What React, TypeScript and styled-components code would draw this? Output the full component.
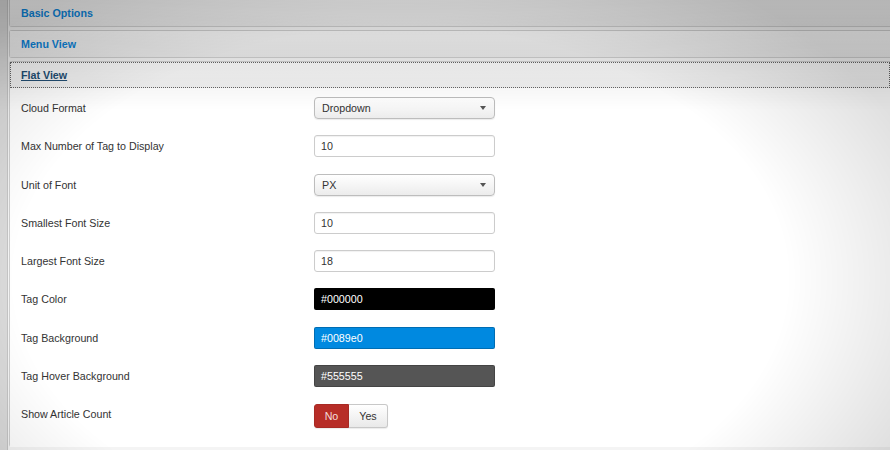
import styled, { createGlobalStyle } from 'styled-components';

const GlobalStyle = createGlobalStyle`
	html, body {
		margin: 0;
		padding: 0;
		background: #e2e2e2;
		font-family: "Liberation Sans", Arial, sans-serif;
		font-size: 10.7px;
		color: #333;
	}
	#root {
		width: 890px;
		height: 450px;
		overflow: hidden;
		position: relative;
	}
`;

interface Field {
	label: string;
	kind: 'select' | 'text' | 'color' | 'toggle';
	value?: string;
	swatch?: string;
}

const fields: Field[] = [
	{ label: 'Cloud Format', kind: 'select', value: 'Dropdown' },
	{ label: 'Max Number of Tag to Display', kind: 'text', value: '10' },
	{ label: 'Unit of Font', kind: 'select', value: 'PX' },
	{ label: 'Smallest Font Size', kind: 'text', value: '10' },
	{ label: 'Largest Font Size', kind: 'text', value: '18' },
	{ label: 'Tag Color', kind: 'color', value: '#000000', swatch: '#000000' },
	{ label: 'Tag Background', kind: 'color', value: '#0089e0', swatch: '#0089e0' },
	{ label: 'Tag Hover Background', kind: 'color', value: '#555555', swatch: '#555555' },
	{ label: 'Show Article Count', kind: 'toggle' },
];

export default function App() {
	return (
		<>
			<GlobalStyle />
			<Page>
				<Sliders>
					<Panel first>
						<Title first>
							<TitleLink>Basic Options</TitleLink>
						</Title>
					</Panel>
					<Panel>
						<Title>
							<TitleLink>Menu View</TitleLink>
						</Title>
					</Panel>
					<Panel open>
						<Title active>
							<TitleLink active>Flat View</TitleLink>
						</Title>
						<Body>
							{fields.map((f) => (
								<Row key={f.label}>
									<Label>{f.label}</Label>
									{f.kind === 'select' && (
										<Select>
											<span>{f.value}</span>
											<Caret />
										</Select>
									)}
									{f.kind === 'text' && <TextInput>{f.value}</TextInput>}
									{f.kind === 'color' && (
										<ColorInput swatch={f.swatch!}>{f.value}</ColorInput>
									)}
									{f.kind === 'toggle' && (
										<Toggle>
											<ToggleBtn active>No</ToggleBtn>
											<ToggleBtn>Yes</ToggleBtn>
										</Toggle>
									)}
								</Row>
							))}
						</Body>
					</Panel>
				</Sliders>
			</Page>
			<Vignette />
		</>
	);
}

const Page = styled.div`
	height: 450px;
	padding-left: 7px;
	background: #dadada;
`;

const Sliders = styled.div`
	height: 100%;
	display: flex;
	flex-direction: column;
	border-left: 1px solid #c4c4c4;
	background: #f4f4f4;
`;

const Panel = styled.div<{ first?: boolean; open?: boolean }>`
	display: flex;
	flex-direction: column;
	flex: ${(p) => (p.open ? '1' : 'none')};
	margin-left: 1px;
	margin-bottom: 3px;
	border: 1px solid #cfcfcf;
	border-right: 0;
	border-top: ${(p) => (p.first ? '0' : '1px solid #cfcfcf')};
	border-radius: ${(p) => (p.first ? '0 0 0 3px' : '3px 0 0 3px')};
	background: ${(p) => (p.open ? '#fff' : '#f2f2f2')};
	border-bottom: ${(p) => (p.open ? '0' : '1px solid #cfcfcf')};
`;

const Title = styled.h3<{ first?: boolean; active?: boolean }>`
	margin: 0;
	flex: none;
	height: 26px;
	display: flex;
	align-items: center;
	padding-left: 11px;
	background: ${(p) => (p.active ? 'linear-gradient(#fbfbfb, #f1f1f1)' : 'linear-gradient(#fafafa, #ececec)')};
	outline: ${(p) => (p.active ? '1px dotted #666' : 'none')};
	outline-offset: -1px;
`;

const TitleLink = styled.a<{ active?: boolean }>`
	font-size: 10.7px;
	font-weight: bold;
	color: ${(p) => (p.active ? '#234f74' : '#0d86dc')};
	text-decoration: ${(p) => (p.active ? 'underline' : 'none')};
`;

const Body = styled.div`
	flex: 1;
	display: grid;
	grid-template-columns: 293px 1fr;
	grid-auto-rows: 22px;
	row-gap: 16.3px;
	padding: 9px 0 0 11px;
	background: #fff;
`;

const Row = styled.div`
	display: contents;
`;

const Label = styled.div`
	display: flex;
	align-items: center;
	height: 22px;
	color: #333;
`;

const controlBox = `
	box-sizing: border-box;
	width: 181px;
	height: 22px;
	display: flex;
	align-items: center;
	padding: 0 7px 0 6px;
	font-size: 10.7px;
`;

const Select = styled.div`
	${controlBox}
	padding-left: 7px;
	justify-content: space-between;
	border: 1px solid #bdbdbd;
	border-radius: 4px;
	background: linear-gradient(#ffffff, #ececec);
	box-shadow: 0 1px 1px rgba(0, 0, 0, 0.08);
	color: #333;
`;

const Caret = styled.span`
	width: 0;
	height: 0;
	margin-right: 1px;
	border-left: 3.5px solid transparent;
	border-right: 3.5px solid transparent;
	border-top: 4px solid #555;
`;

const TextInput = styled.div`
	${controlBox}
	border: 1px solid #ccc;
	border-radius: 3px;
	background: #fff;
	box-shadow: inset 0 1px 1px rgba(0, 0, 0, 0.06);
	color: #333;
`;

const ColorInput = styled.div<{ swatch: string }>`
	${controlBox}
	border: 1px solid rgba(0, 0, 0, 0.2);
	border-radius: 2px;
	background: ${(p) => p.swatch};
	color: #fff;
`;

const Toggle = styled.div`
	display: flex;
	height: 24px;
	margin-top: 1px;
`;

const ToggleBtn = styled.div<{ active?: boolean }>`
	box-sizing: border-box;
	display: flex;
	align-items: center;
	justify-content: center;
	width: ${(p) => (p.active ? '35px' : '39px')};
	font-size: 10.7px;
	border: 1px solid ${(p) => (p.active ? '#a82a24' : '#c8c8c8')};
	border-left: ${(p) => (p.active ? '1px solid #a82a24' : '0')};
	border-radius: ${(p) => (p.active ? '3px 0 0 3px' : '0 3px 3px 0')};
	background: ${(p) => (p.active ? '#b72d27' : 'linear-gradient(#ffffff, #e9e9e9)')};
	color: ${(p) => (p.active ? '#f4dedd' : '#333')};
	box-shadow: 0 1px 1px rgba(0, 0, 0, 0.08);
`;

const Vignette = styled.div`
	position: fixed;
	inset: 0;
	pointer-events: none;
	background:
		linear-gradient(rgba(0, 0, 0, 0.17), rgba(0, 0, 0, 0.08) 60px, rgba(0, 0, 0, 0) 110px),
		radial-gradient(ellipse 62% 80% at 45% 62%, rgba(0, 0, 0, 0) 70%, rgba(0, 0, 0, 0.12) 100%);
`;
